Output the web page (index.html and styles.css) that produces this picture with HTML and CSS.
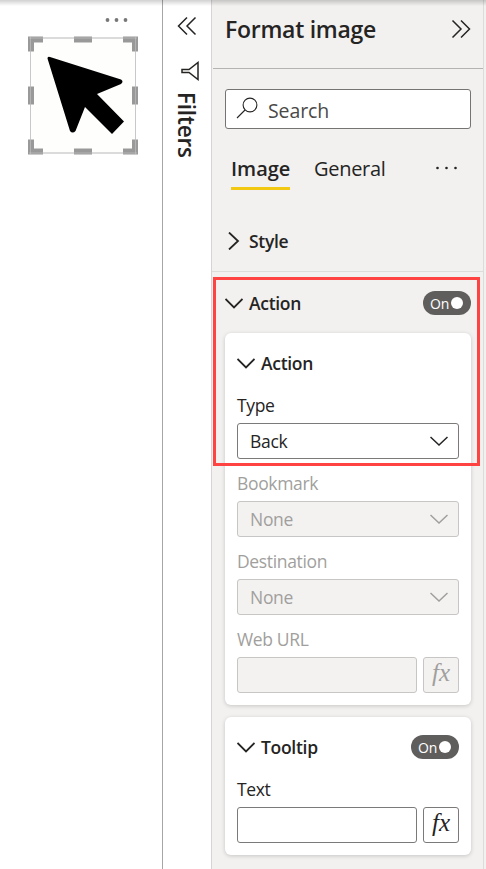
FILE: index.html
```
<!DOCTYPE html>
<html lang="en">
<head>
<meta charset="utf-8">
<title>Format image</title>
<link rel="stylesheet" href="styles.css">
</head>
<body>
<div class="app">
  <main class="canvas">
    <svg class="visual" width="162" height="170" viewBox="0 0 162 170">
      <g fill="#777"><circle cx="107.500" cy="20" r="1.900"/><circle cx="116.500" cy="20" r="1.900"/><circle cx="125.500" cy="20" r="1.900"/></g>
      <rect x="30.500" y="38" width="105" height="115" fill="#fefefd" stroke="#c8c8c8"/>
      <path d="M47.500 58.500Q47.500 56 50 57L121 79.500Q124 81.500 121 84L97 94L124 121.500L112 134L85 107L75.500 131Q72.500 134 70 131Z" fill="#000"/>
      <g fill="#999">
        <path d="M28 36.500H43V42.500H34V51.500H28ZM123 36.500H138V51.500H132V42.500H123ZM28 139.500H34V148.500H43V154.500H28ZM132 139.500H138V154.500H123V148.500H132Z"/>
        <path d="M74 36.500h18v6H74zM74 148.500h18v6H74zM28 86.500h6v18h-6zM132 86.500h6v18h-6z"/>
      </g>
      <path d="M30.500 37V154M135.500 37V154M29 38H137M29 153H137" stroke="#c8c8c8" stroke-opacity=".55" fill="none"/>
    </svg>
  </main>
  <aside class="filters">
    <svg class="collapse" width="20" height="20" viewBox="0 0 20 20"><path d="M10 1.500L1.500 10L10 18.500M18.500 1.500L10 10L18.500 18.500"/></svg>
    <svg class="funnel" width="18" height="20" viewBox="0 0 18 20"><path d="M17 1.500V18.500L8 11.500H1V8.500H8Z"/></svg>
    <span class="filters-title">Filters</span>
  </aside>
  <section class="pane">
    <header class="pane-header">
      <h1 class="title">Format image</h1>
      <svg class="expand" width="20" height="20" viewBox="0 0 20 20"><path d="M1.500 1.500L10 10L1.500 18.500M10 1.500L18.500 10L10 18.500"/></svg>
    </header>
    <div class="search">
      <svg width="22" height="22" viewBox="0 0 22 22"><circle cx="14" cy="8" r="6.900"/><path d="M9 13L1 21"/></svg>
      <span class="search-text">Search</span>
    </div>
    <nav class="tabs">
      <span class="tab tab-active">Image</span>
      <span class="tab tab-general">General</span>
      <svg class="more" width="24" height="4" viewBox="0 0 24 4"><circle cx="2.500" cy="2" r="1.300"/><circle cx="11.500" cy="2" r="1.300"/><circle cx="20.500" cy="2" r="1.300"/></svg>
    </nav>
    <div class="row row-style">
      <svg class="chevron" width="18" height="18" viewBox="0 0 18 18"><path d="M4 .5L13 9L4 17.500"/></svg>
      <span class="heading">Style</span>
    </div>
    <div class="row row-action">
      <svg class="chevron" width="18" height="18" viewBox="0 0 18 18"><path d="M.5 5L9 13.500L17.500 5"/></svg>
      <span class="heading">Action</span>
      <span class="toggle"><span>On</span><i class="knob"></i></span>
    </div>
    <div class="card">
      <div class="card-head">
        <svg class="chevron" width="18" height="18" viewBox="0 0 18 18"><path d="M.5 5L9 13.500L17.500 5"/></svg>
        <span class="heading">Action</span>
      </div>
      <div class="field">
        <span class="label">Type</span>
        <div class="select"><span>Back</span><svg width="18" height="18" viewBox="0 0 18 18"><path d="M.5 5L9 13L17.500 5"/></svg></div>
      </div>
      <div class="field disabled">
        <span class="label">Bookmark</span>
        <div class="select"><span>None</span><svg width="18" height="18" viewBox="0 0 18 18"><path d="M.5 5L9 13L17.500 5"/></svg></div>
      </div>
      <div class="field disabled">
        <span class="label">Destination</span>
        <div class="select"><span>None</span><svg width="18" height="18" viewBox="0 0 18 18"><path d="M.5 5L9 13L17.500 5"/></svg></div>
      </div>
      <div class="field disabled">
        <span class="label">Web URL</span>
        <div class="inputs"><div class="input"></div><div class="fx"><span>fx</span></div></div>
      </div>
    </div>
    <div class="card card-tooltip">
      <div class="card-head">
        <svg class="chevron" width="18" height="18" viewBox="0 0 18 18"><path d="M.5 5L9 13.500L17.500 5"/></svg>
        <span class="heading">Tooltip</span>
        <span class="toggle"><span>On</span><i class="knob"></i></span>
      </div>
      <div class="field">
        <span class="label">Text</span>
        <div class="inputs"><div class="input"></div><div class="fx"><span>fx</span></div></div>
      </div>
    </div>
    <div class="highlight"></div>
  </section>
  <div class="edge"></div>
  <div class="top-shadow"></div>
</div>
</body>
</html>
```

FILE: styles.css
```
* { box-sizing: border-box; }
body {
  margin: 0;
  font-family: "Open Sans", "Noto Sans", sans-serif;
  color: #252423;
  background: #fff;
}
svg { display: block; flex: none; }
.app { position: relative; display: flex; width: 486px; height: 869px; overflow: hidden; }
.canvas { width: 163px; border-right: 1px solid #a6a6a6; }
.filters {
  width: 49px;
  border-right: 1px solid #d6d5d4;
  padding: 16px 0 0 14px;
}
.filters svg, .expand, .search svg, .chevron, .select svg { fill: none; stroke: #252423; stroke-width: 1.5; }
.collapse { margin-left: 0; }
.funnel { margin: 25px 0 0 4px; }
.filters-title {
  display: block;
  margin: 11px 0 0 -5px;
  writing-mode: vertical-rl;
  font-size: 22.5px;
  line-height: 28px;
  font-weight: 600;
  letter-spacing: -.2px;
}
.pane { position: relative; width: 272px; border-right: 1px solid #dddcda; background: #f2f1f0; }
.edge { width: 2px; background: #f2f1f0; }
.pane-header {
  display: flex;
  align-items: center;
  justify-content: space-between;
  height: 69px;
  margin-left: 1px;
  padding: 0 12px 9px;
  border-bottom: 1px solid #b5b3b1;
}
.title { margin: -1px 0 0; font-size: 23px; font-weight: 600; letter-spacing: -.27px; white-space: nowrap; }
.expand { margin-top: -2px; }
.search {
  display: flex;
  align-items: center;
  height: 40px;
  margin: 20px 12px 0 13px;
  padding-left: 10px;
  border: 1px solid #767472;
  border-radius: 3px;
  background: #fff;
}
.search svg { stroke-width: 1.1; margin-top: -3px; }
.search-text { margin: 3px 0 0 10px; font-size: 19.5px; letter-spacing: -.1px; color: #4a4948; }
.tabs { display: flex; height: 61px; padding: 24px 19px 0; }
.tab { height: 37px; font-size: 20px; line-height: 32px; white-space: nowrap; }
.tab-active { width: 59px; border-bottom: 3px solid #f2c811; font-weight: 600; }
.tab-general { margin-left: 24px; letter-spacing: -.3px; }
.more { margin: 13px 5px 0 auto; fill: #252423; }
.row { display: flex; align-items: center; padding: 0 12px 0 13px; }
.row-style { height: 82px; padding-top: 21px; border-bottom: 1px solid #dddcda; }
.row-action { height: 61px; }
.heading { margin: 0 0 0 6px; font-size: 17.5px; line-height: 24px; font-weight: 600; letter-spacing: -.3px; }
.row .chevron, .card-head .chevron { stroke-width: 1.8; }
.toggle {
  display: flex;
  align-items: center;
  width: 48px;
  height: 24px;
  margin-left: auto;
  padding-left: 7px;
  border-radius: 12px;
  background: #605e5c;
  color: #fff;
  font-size: 14px;
  letter-spacing: -.2px;
}
.toggle span { margin-top: 1px; }
.knob { width: 12px; height: 12px; margin-left: 2px; border-radius: 50%; background: #fff; }
.card {
  height: 372px;
  margin: 0 12px 0 13px;
  padding: 18px 12px 12px;
  border-radius: 6px;
  background: #fff;
  box-shadow: 0 1px 4px rgba(0, 0, 0, .18);
}
.card-tooltip { height: 138px; margin-top: 12px; }
.card-head { display: flex; align-items: center; height: 24px; }
.field { display: flex; flex-direction: column; height: 78px; padding-top: 6px; }
.label { height: 36px; font-size: 17.5px; line-height: 36px; letter-spacing: -.35px; }
.card-head + .field { height: 84px; padding-top: 12px; }
.select, .input, .fx { height: 36px; border: 1px solid #7c7a78; border-radius: 3px; background: #fff; }
.select { display: flex; align-items: center; justify-content: space-between; padding: 0 10px 0 12px; font-size: 17.5px; letter-spacing: -.3px; }
.inputs { display: flex; gap: 6px; }
.input { width: 180px; }
.fx {
  width: 36px;
  font: italic 25px/30px "Liberation Serif", serif;
  text-align: center;
}
.disabled { color: #a19f9d; }
.disabled .select, .disabled .input, .disabled .fx { border-color: #c8c6c4; background: #f3f2f1; }
.disabled .select svg { stroke: #a19f9d; }
.highlight {
  position: absolute;
  left: 1px;
  top: 277px;
  width: 267px;
  height: 189px;
  border: 3px solid #ff4343;
}
.top-shadow {
  position: absolute;
  inset: 0 0 auto;
  height: 6px;
  background: linear-gradient(rgba(0, 0, 0, .18), transparent);
}
```
